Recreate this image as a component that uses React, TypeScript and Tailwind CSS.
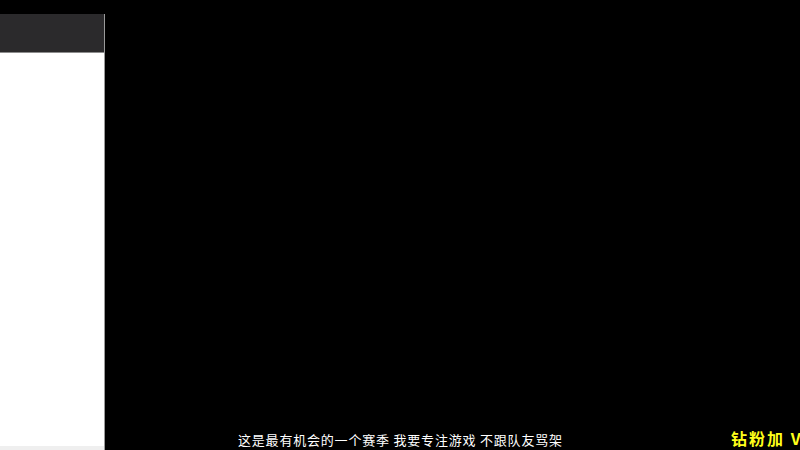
import React from 'react';

const cjk = { fontFamily: '"Noto Sans CJK SC", "Noto Sans", sans-serif' };

const App: React.FC = () => {
  return (
    <div className="relative w-[800px] h-[450px] bg-black overflow-hidden flex">
      {/* left side panel */}
      <div className="w-[105px] pt-[14px] flex flex-col">
        <div className="flex-1 flex flex-col border-r border-[#9a9a9a]">
          <div className="h-[39px] bg-[#2b2a2c] border-b border-[#8c8c8c]" />
          <div className="flex-1 bg-white" />
          <div className="h-[4px] bg-[#efefef]" />
        </div>
      </div>

      {/* video area */}
      <div className="flex-1" />

      {/* subtitle overlay */}
      <div
        className="absolute left-[238px] top-[431px] text-[13px] leading-[18px] text-white whitespace-nowrap tracking-[0.8px]"
        style={cjk}
      >
        这是最有机会的一个赛季 我要专注游戏 不跟队友骂架
      </div>
      <div
        className="absolute left-[731px] top-[428px] text-[16px] leading-[20px] font-bold text-[#ffff1a] whitespace-nowrap tracking-[2px]"
        style={cjk}
      >
        钻粉加 V
      </div>
    </div>
  );
};

export default App;
